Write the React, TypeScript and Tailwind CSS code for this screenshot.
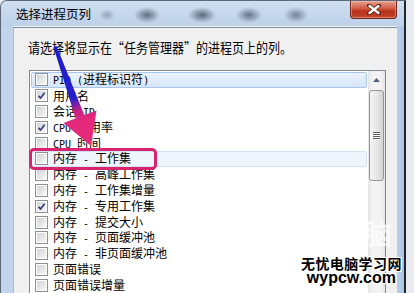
const rows = [
  { label: "PID (进程标识符)", checked: false },
  { label: "用户名", checked: true },
  { label: "会话 ID", checked: false },
  { label: "CPU 使用率", checked: true },
  { label: "CPU 时间", checked: false },
  { label: "内存 - 工作集", checked: false },
  { label: "内存 - 高峰工作集", checked: false },
  { label: "内存 - 工作集增量", checked: false },
  { label: "内存 - 专用工作集", checked: true },
  { label: "内存 - 提交大小", checked: false },
  { label: "内存 - 页面缓冲池", checked: false },
  { label: "内存 - 非页面缓冲池", checked: false },
  { label: "页面错误", checked: false },
  { label: "页面错误增量", checked: false },
];

// latin runs get the narrow bitmap-ish mono font, CJK stays at 12px
function Label({ text }: { text: string }) {
  const parts = text.match(/[\x20-\x7e]+|[^\x20-\x7e]+/g) ?? [];
  return (
    <span className="whitespace-pre">
      {parts.map((p, i) =>
        /[\x20-\x7e]/.test(p[0]) ? (
          <span key={i} className="font-['DejaVu_Sans_Mono'] text-[10px]">
            {p}
          </span>
        ) : (
          <span key={i}>{p}</span>
        )
      )}
    </span>
  );
}

function Checkbox({ checked }: { checked: boolean }) {
  return (
    <span className="flex h-[13px] w-[13px] shrink-0 items-center justify-center border border-[#8e8f8f] bg-white p-[1px]">
      <span className="relative h-full w-full bg-[linear-gradient(135deg,#cfd3d8,#f7f7f7)]">
        {checked && (
          <svg viewBox="0 0 9 9" className="absolute inset-0 h-full w-full">
            <path d="M1.5 4.8 L3.6 7 L7.6 1.8" fill="none" stroke="#2e3f72" strokeWidth="1.7" />
          </svg>
        )}
      </span>
    </span>
  );
}

function Scrollbar() {
  return (
    <div className="flex w-[17px] flex-col bg-[linear-gradient(90deg,#e4e4e4,#f3f3f3_25%,#f3f3f3_75%,#e6e6e6)]">
      <div className="flex h-[17px] items-center justify-center">
        <svg width="7" height="4" viewBox="0 0 7 4">
          <path d="M0 4 L3.5 0 L7 4 Z" fill="#4d6185" />
        </svg>
      </div>
      <div className="mx-[1px] mt-[2px] flex h-[91px] flex-col items-center justify-center gap-[1px] rounded-[3px] border border-[#959595] bg-[linear-gradient(90deg,#f5f5f5,#e6e6e6_55%,#d3d3d3)]">
        {[0, 1, 2, 3].map((i) => (
          <span key={i} className="h-[1px] w-[7px] bg-[#5a5a5a] shadow-[0_1px_0_#fff]" />
        ))}
      </div>
    </div>
  );
}

export default function App() {
  return (
    <div className="relative flex h-[293px] w-[414px] overflow-hidden bg-[#e8ecf0] font-['Noto_Sans_CJK_SC',sans-serif] text-black">
      <div className="flex w-[406px] flex-col overflow-hidden rounded-tl-[7px] border-t border-l border-r-2 border-t-[#5c6877] border-l-[#5c6877] border-r-[#22262b] bg-[#c2d5eb]">
        {/* title bar, glass with blurred stuff behind it */}
        <div className="flex h-[26px] shrink-0 items-start bg-[radial-gradient(ellipse_13px_8px_at_146px_14px,#5f6e80,transparent),radial-gradient(ellipse_14px_8px_at_201px_14px,#5b6a7c,transparent),radial-gradient(ellipse_13px_8px_at_248px_14px,#66768a,transparent),radial-gradient(ellipse_12px_8px_at_295px_14px,#74849a,transparent),radial-gradient(ellipse_8px_6px_at_106px_14px,#93a3b6,transparent),linear-gradient(#d0dff0,#bcd0e8)]">
          <span className="ml-[15px] mt-[4px] text-[12.5px] leading-[18px]">选择进程页列</span>
          <div className="ml-auto mr-[7px] flex h-[18px] w-[47px] items-center justify-center rounded-b-[4px] border border-t-0 border-[#6e2318] bg-[linear-gradient(#e6a393,#d0583f_45%,#b8301c_60%,#c4452c)] shadow-[inset_0_0_0_1px_rgba(255,200,190,0.45)]">
            <svg width="14" height="11" viewBox="0 0 14 11">
              <path d="M2 1.5 L12 9.5 M12 1.5 L2 9.5" stroke="#5a1a10" strokeWidth="4" strokeLinecap="round" />
              <path d="M2.5 2 L11.5 9 M11.5 2 L2.5 9" stroke="#fff" strokeWidth="2.4" strokeLinecap="round" />
            </svg>
          </div>
        </div>

        <div className="flex min-h-0 flex-1">
          <div className="w-[12px] shrink-0" />
          <div className="flex w-[384px] shrink-0 flex-col border-t border-l border-t-[#7f8b99] border-l-[#aab8c8] bg-[#f0f0f0] shadow-[0_-1px_0_#eef4fb]">
            <p className="ml-[14px] pt-[11px] text-[12px] leading-[16px]">
              <span className="inline-block scale-y-[1.12]">请选择将显示在“任务管理器”的进程页上的列。</span>
            </p>
            <div className="ml-[15px] mt-[15px] flex min-h-0 w-[357px] flex-1 border-t border-l border-r border-[#828790] bg-white">
              <div className="flex-1 px-[1px] pt-[1px] text-[12px]">
                {rows.map((r, i) => (
                  <div
                    key={r.label}
                    className={`flex h-[15.8px] items-center gap-[5px] rounded-[2px] border pl-[3px] leading-none ${
                      i === 0
                        ? "border-[#a9c7ea] bg-[linear-gradient(#eaf2fc,#d7e6f8)]"
                        : i === 5
                        ? "border-[#d3e3f5] bg-[#eef5fd]"
                        : "border-transparent"
                    }`}
                  >
                    <Checkbox checked={r.checked} />
                    <Label text={r.label} />
                  </div>
                ))}
              </div>
              <Scrollbar />
            </div>
          </div>
          <div className="w-[7px] shrink-0 bg-[linear-gradient(90deg,#b9d0ea,#a6c2e2)]" />
        </div>
      </div>
      <div className="w-[8px] shrink-0" />

      {/* annotation: red box + arrow */}
      <div className="pointer-events-none absolute left-[29px] top-[148px] h-[22px] w-[128px] rounded-[5px] border-[3px] border-[#d8246f]" />
      <svg className="pointer-events-none absolute inset-0" width="414" height="293" viewBox="0 0 414 293">
        <defs>
          <linearGradient id="arr" gradientUnits="userSpaceOnUse" x1="55" y1="47" x2="90" y2="146">
            <stop offset="0" stopColor="#1c1ccf" />
            <stop offset="0.52" stopColor="#2a1fc8" />
            <stop offset="0.64" stopColor="#c0228a" />
            <stop offset="0.74" stopColor="#e4287c" />
            <stop offset="1" stopColor="#e62c7c" />
          </linearGradient>
        </defs>
        <polygon points="53.5,47 56.5,46 84.5,115.5 75.5,118.5" fill="url(#arr)" />
        <polygon points="63.5,123 96.5,110.5 91,146" fill="url(#arr)" />
      </svg>

      {/* site watermark */}
      <div className="pointer-events-none absolute left-[364px] top-[219px] text-[28px] font-bold leading-none text-white/70">脑</div>
      <div className="pointer-events-none absolute left-[301px] top-[256px] flex flex-col items-center leading-none [text-shadow:1px_0_0_#fff,-1px_0_0_#fff,0_1px_0_#fff,0_-1px_0_#fff,1px_1px_0_#fff,-1px_-1px_0_#fff,1px_-1px_0_#fff,-1px_1px_0_#fff]">
        <span className="text-[14px] font-bold tracking-[0.4px]">无忧电脑学习网</span>
        <span className="font-['Liberation_Sans',sans-serif] text-[16px] font-bold">wypcw.com</span>
      </div>
    </div>
  );
}
